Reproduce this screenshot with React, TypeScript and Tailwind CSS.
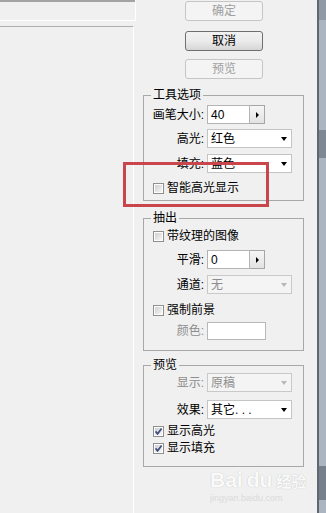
import type { ReactNode } from 'react';

function Check({ checked = false }: { checked?: boolean }) {
  return (
    <svg width="11" height="11" viewBox="0 0 11 11" className="shrink-0">
      <defs>
        <linearGradient id={checked ? 'cbg1' : 'cbg0'} x1="0" y1="0" x2="1" y2="1">
          <stop offset="0" stopColor="#cfcfd4" />
          <stop offset="1" stopColor="#f7f7f7" />
        </linearGradient>
      </defs>
      <rect x="0.5" y="0.5" width="10" height="10" fill="#fdfdfd" stroke="#8e8f8f" />
      <rect x="2" y="2" width="7" height="7" fill={`url(#${checked ? 'cbg1' : 'cbg0'})`} />
      {checked && <path d="M2.6 5.4 L4.6 7.8 L8.6 2.6" stroke="#3f4d7a" strokeWidth="1.7" fill="none" />}
    </svg>
  );
}

function Group({ title, className, children }: { title: string; className: string; children: ReactNode }) {
  return (
    <div className={`ml-[7px] w-[161px] border border-[#a8a8a8] ${className}`}>
      <div className="-mt-[7px] ml-[7px] w-fit bg-[#f0f0f0] px-[2px] text-black">{title}</div>
      {children}
    </div>
  );
}

function Label({ text, disabled = false }: { text: string; disabled?: boolean }) {
  return (
    <div className={`w-[63px] shrink-0 pr-[3px] text-right ${disabled ? 'text-[#8d8d8d]' : 'text-black'}`}>{text}</div>
  );
}

function Spin({ value }: { value: string }) {
  return (
    <div className="flex h-[19px]">
      <div className="flex w-[43px] items-center border border-[#b4b4b4] bg-white pl-[3px] text-black">{value}</div>
      <div className="flex w-[15px] items-center justify-center border border-l-0 border-[#a6a6a6] bg-gradient-to-b from-[#f6f6f6] to-[#e2e2e2]">
        <div className="h-0 w-0 border-y-[3px] border-l-[3px] border-y-transparent border-l-black" />
      </div>
    </div>
  );
}

function Select({ value, disabled = false }: { value: string; disabled?: boolean }) {
  return (
    <div
      className={`flex h-[19px] w-[85px] items-center justify-between border pl-[3px] pr-[4px] ${
        disabled ? 'border-[#c9c9c9] bg-[#f4f4f4] text-[#8d8d8d]' : 'border-[#c4c4c4] bg-white text-black'
      }`}
    >
      <span className="whitespace-pre">{value}</span>
      <div
        className={`h-0 w-0 border-x-[3.5px] border-t-[4px] border-x-transparent ${
          disabled ? 'border-t-[#b8b8b8]' : 'border-t-black'
        }`}
      />
    </div>
  );
}

function CheckRow({ text, checked = false, className }: { text: string; checked?: boolean; className: string }) {
  return (
    <div className={`flex h-[14px] items-center gap-[3px] pl-[9px] text-black ${className}`}>
      <Check checked={checked} />
      <span>{text}</span>
    </div>
  );
}

function Button({ text, disabled = false, className }: { text: string; disabled?: boolean; className: string }) {
  return (
    <div
      className={`flex h-[20px] w-[78px] items-center justify-center rounded-[3px] border ${
        disabled
          ? 'border-[#c5c5c5] bg-[#f4f4f4] text-[#a0a0a0]'
          : 'border-[#6f6f6f] bg-gradient-to-b from-[#f2f2f2] via-[#ebebeb] to-[#d6d6d6] text-black'
      } ${className}`}
    >
      {text}
    </div>
  );
}

export default function App() {
  return (
    <div className="relative flex h-[513px] w-[326px] overflow-hidden bg-[#f0f0f0] font-['Liberation_Sans','Noto_Sans_CJK_SC',sans-serif] text-[12px] leading-[12px]">
      <div className="flex w-[136px] flex-col">
        <div className="h-[21px] border-r border-b border-white">
          <div className="h-[2px] bg-[#a3a3a3]" />
        </div>
        <div className="mt-[5px] mr-[2px] flex-1 border-t border-r border-t-[#b0b0b0] border-r-white" />
      </div>

      <div className="flex w-[181px] flex-col">
        <div className="ml-[49px] flex flex-col">
          <Button text="确定" disabled className="mt-[1px]" />
          <Button text="取消" className="mt-[10px]" />
          <Button text="预览" disabled className="mt-[8px]" />
        </div>

        <Group title="工具选项" className="mt-[16px] h-[106px]">
          <div className="mt-[4px] flex items-center">
            <Label text="画笔大小:" />
            <Spin value="40" />
          </div>
          <div className="mt-[5px] flex items-center">
            <Label text="高光:" />
            <Select value="红色" />
          </div>
          <div className="mt-[6px] flex items-center">
            <Label text="填充:" />
            <Select value="蓝色" />
          </div>
          <CheckRow text="智能高光显示" className="mt-[8px]" />
        </Group>

        <Group title="抽出" className="mt-[17px] h-[133px]">
          <CheckRow text="带纹理的图像" className="mt-[5px]" />
          <div className="mt-[7px] flex items-center">
            <Label text="平滑:" />
            <Spin value="0" />
          </div>
          <div className="mt-[6px] flex items-center">
            <Label text="通道:" />
            <Select value="无" disabled />
          </div>
          <CheckRow text="强制前景" className="mt-[9px]" />
          <div className="mt-[5px] flex items-center">
            <Label text="颜色:" disabled />
            <div className="h-[18px] w-[59px] border border-[#b8b8b8] bg-white" />
          </div>
        </Group>

        <Group title="预览" className="mt-[14px] h-[102px]">
          <div className="mt-[2px] flex items-center">
            <Label text="显示:" disabled />
            <Select value="原稿" disabled />
          </div>
          <div className="mt-[8px] flex items-center">
            <Label text="效果:" />
            <Select value="其它. . ." />
          </div>
          <CheckRow text="显示高光" checked className="mt-[5px]" />
          <CheckRow text="显示填充" checked className="mt-[3px]" />
        </Group>

        <div className="ml-[74px] mt-[1px] flex flex-col items-start">
          <div className="flex items-end gap-[2px] text-[21px] leading-[24px] font-bold text-[#fafafa] [text-shadow:0_0_1px_#b5b5b5]">
            <span>Bai</span>
            <span className="rounded-full px-[2px]">du</span>
            <span className="text-[15px] leading-[20px]">经验</span>
          </div>
          <div className="mt-[1px] text-[9px] leading-[10px] text-[#dadada]">jingyan.baidu.com</div>
        </div>
      </div>

      <div className="flex w-[9px] flex-col border-l-2 border-l-[#5f6770] bg-[#aab5c1]">
        <div className="h-[20px] bg-[#8f9aa6]" />
        <div className="mt-[110px] h-[28px] bg-[#7d8894]" />
        <div className="mt-[308px] h-[34px] bg-[#75808c]" />
      </div>

      <div className="absolute top-[162px] left-[123px] h-[45px] w-[146px] border-[3px] border-[#c8464c]" />
    </div>
  );
}
